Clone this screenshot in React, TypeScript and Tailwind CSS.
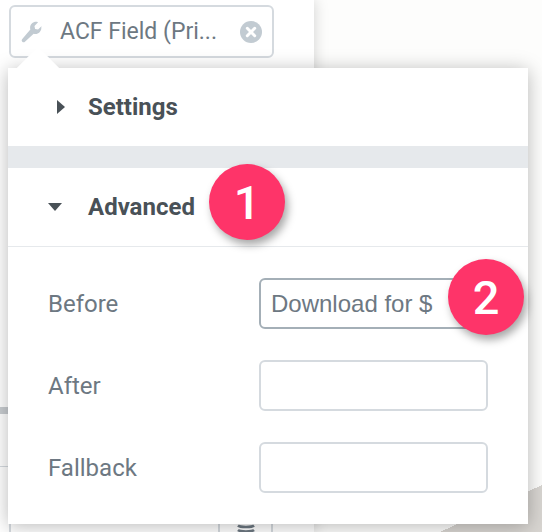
import React from 'react';

function Field({ label, value, active }: { label: string; value?: string; active?: boolean }) {
  return (
    <div className="flex items-center h-[51px]">
      <span className="w-[211px] text-[24px] leading-none text-[#6d7882]">{label}</span>
      <div
        className={`w-[229px] h-[51px] rounded-[6px] border-2 flex items-center pl-[10px] bg-white text-[24px] text-[#6d7882] font-['Liberation_Sans',sans-serif] ${active ? 'border-[#a4afb7]' : 'border-[#d5dadf]'}`}
      >
        {value}
      </div>
    </div>
  );
}

function Badge({ n, className }: { n: string; className: string }) {
  return (
    <div
      className={`absolute w-[76px] h-[76px] rounded-full bg-[#fe3469] text-white text-[47px] font-medium leading-none flex items-center justify-center shadow-[3px_5px_9px_rgba(0,0,0,0.35)] ${className}`}
    >
      {n}
    </div>
  );
}

export default function App() {
  return (
    <div className="relative w-[542px] h-[532px] overflow-hidden bg-[#fdfdfc] font-['Roboto',sans-serif]">
      <div className="absolute left-[440px] top-[485px] w-[102px] h-[47px] bg-[linear-gradient(to_bottom_right,transparent_50%,#d8d5d1_50%)]" />

      {/* sidebar behind the popover */}
      <div className="relative w-[314px] h-[532px] bg-white shadow-[0_0_14px_rgba(0,0,0,0.18)] pt-[5px] pl-[9px]">
        <div className="w-[265px] h-[53px] rounded-[6px] border-2 border-[#d5dadf] flex items-center pl-[10px] pr-[10px]">
          <svg width="22" height="22" viewBox="0 0 24 24" fill="#c2cbd2" className="shrink-0">
            <path d="M23 5.800c-.1-.3-.5-.4-.7-.2l-3.700 3.600-3.200-.6-.7-3.200 3.700-3.700c.2-.2.1-.6-.2-.7-2.300-.6-4.700 0-6.400 1.700-1.800 1.800-2.300 4.300-1.600 6.500L1.400 19.700c-.9.900-.9 2 0 2.900s2 .9 2.900 0l9.500-8.800c2.200.7 4.700.2 6.500-1.600 1.700-1.700 2.300-4.100 1.700-6.400z" />
          </svg>
          <span className="ml-[17px] pt-[1px] text-[23px] text-[#6d7882] whitespace-nowrap">ACF Field (Pri...</span>
          <svg width="22" height="22" viewBox="0 0 22 22" className="ml-auto shrink-0">
            <circle cx="11" cy="11" r="11" fill="#c2cbd2" />
            <path d="M7.300 7.300l7.400 7.400M14.700 7.300l-7.400 7.400" stroke="#fff" strokeWidth="3" strokeLinecap="round" />
          </svg>
        </div>
      </div>

      {/* bits of the sidebar showing under the popover */}
      <div className="absolute left-0 top-[407px] w-[8px] h-[7px] bg-[#c8ccd0]" />
      <div className="absolute left-0 top-[466px] w-[8px] h-px bg-[#d5dadf]" />
      <div className="absolute left-[9px] top-[524px] w-[264px] h-[8px] border-x-2 border-[#d5dadf] flex justify-end">
        <div className="w-[53px] h-full border-l-2 border-[#d5dadf] flex justify-center">
          <svg width="18" height="8" viewBox="0 0 18 8" fill="none" stroke="#6d7882" strokeWidth="2.500">
            <path d="M1 1.500c2 2 14 2 16 0M1 6c2 2 14 2 16 0" />
          </svg>
        </div>
      </div>

      {/* popover */}
      <div className="absolute left-[8px] top-[68px] w-[520px] h-[456px] bg-white shadow-[0_2px_18px_rgba(0,0,0,0.28)]">
        <div className="absolute left-[15px] -top-[15px] w-[30px] h-[30px] rotate-45 bg-white" />
        <div className="relative h-[78px] flex items-center text-[#495157]">
          <svg width="8" height="14" viewBox="0 0 8 14" fill="currentColor" className="ml-[49px]">
            <path d="M0 0l8 7-8 7z" />
          </svg>
          <span className="ml-[23px] text-[24px] font-bold">Settings</span>
        </div>
        <div className="h-[22px] bg-[#e6e9ec]" />
        <div className="h-[79px] flex items-center border-b-[1.500px] border-[#e6e9ec] text-[#495157]">
          <svg width="14" height="8" viewBox="0 0 14 8" fill="currentColor" className="ml-[40px]">
            <path d="M0 0h14l-7 8z" />
          </svg>
          <span className="ml-[26px] text-[24px] font-bold">Advanced</span>
        </div>
        <div className="pt-[31px] pl-[40px] flex flex-col gap-[31px]">
          <Field label="Before" value="Download for $" active />
          <Field label="After" />
          <Field label="Fallback" />
        </div>
      </div>

      <Badge n="1" className="left-[209px] top-[164px]" />
      <Badge n="2" className="left-[448px] top-[259px]" />
    </div>
  );
}
